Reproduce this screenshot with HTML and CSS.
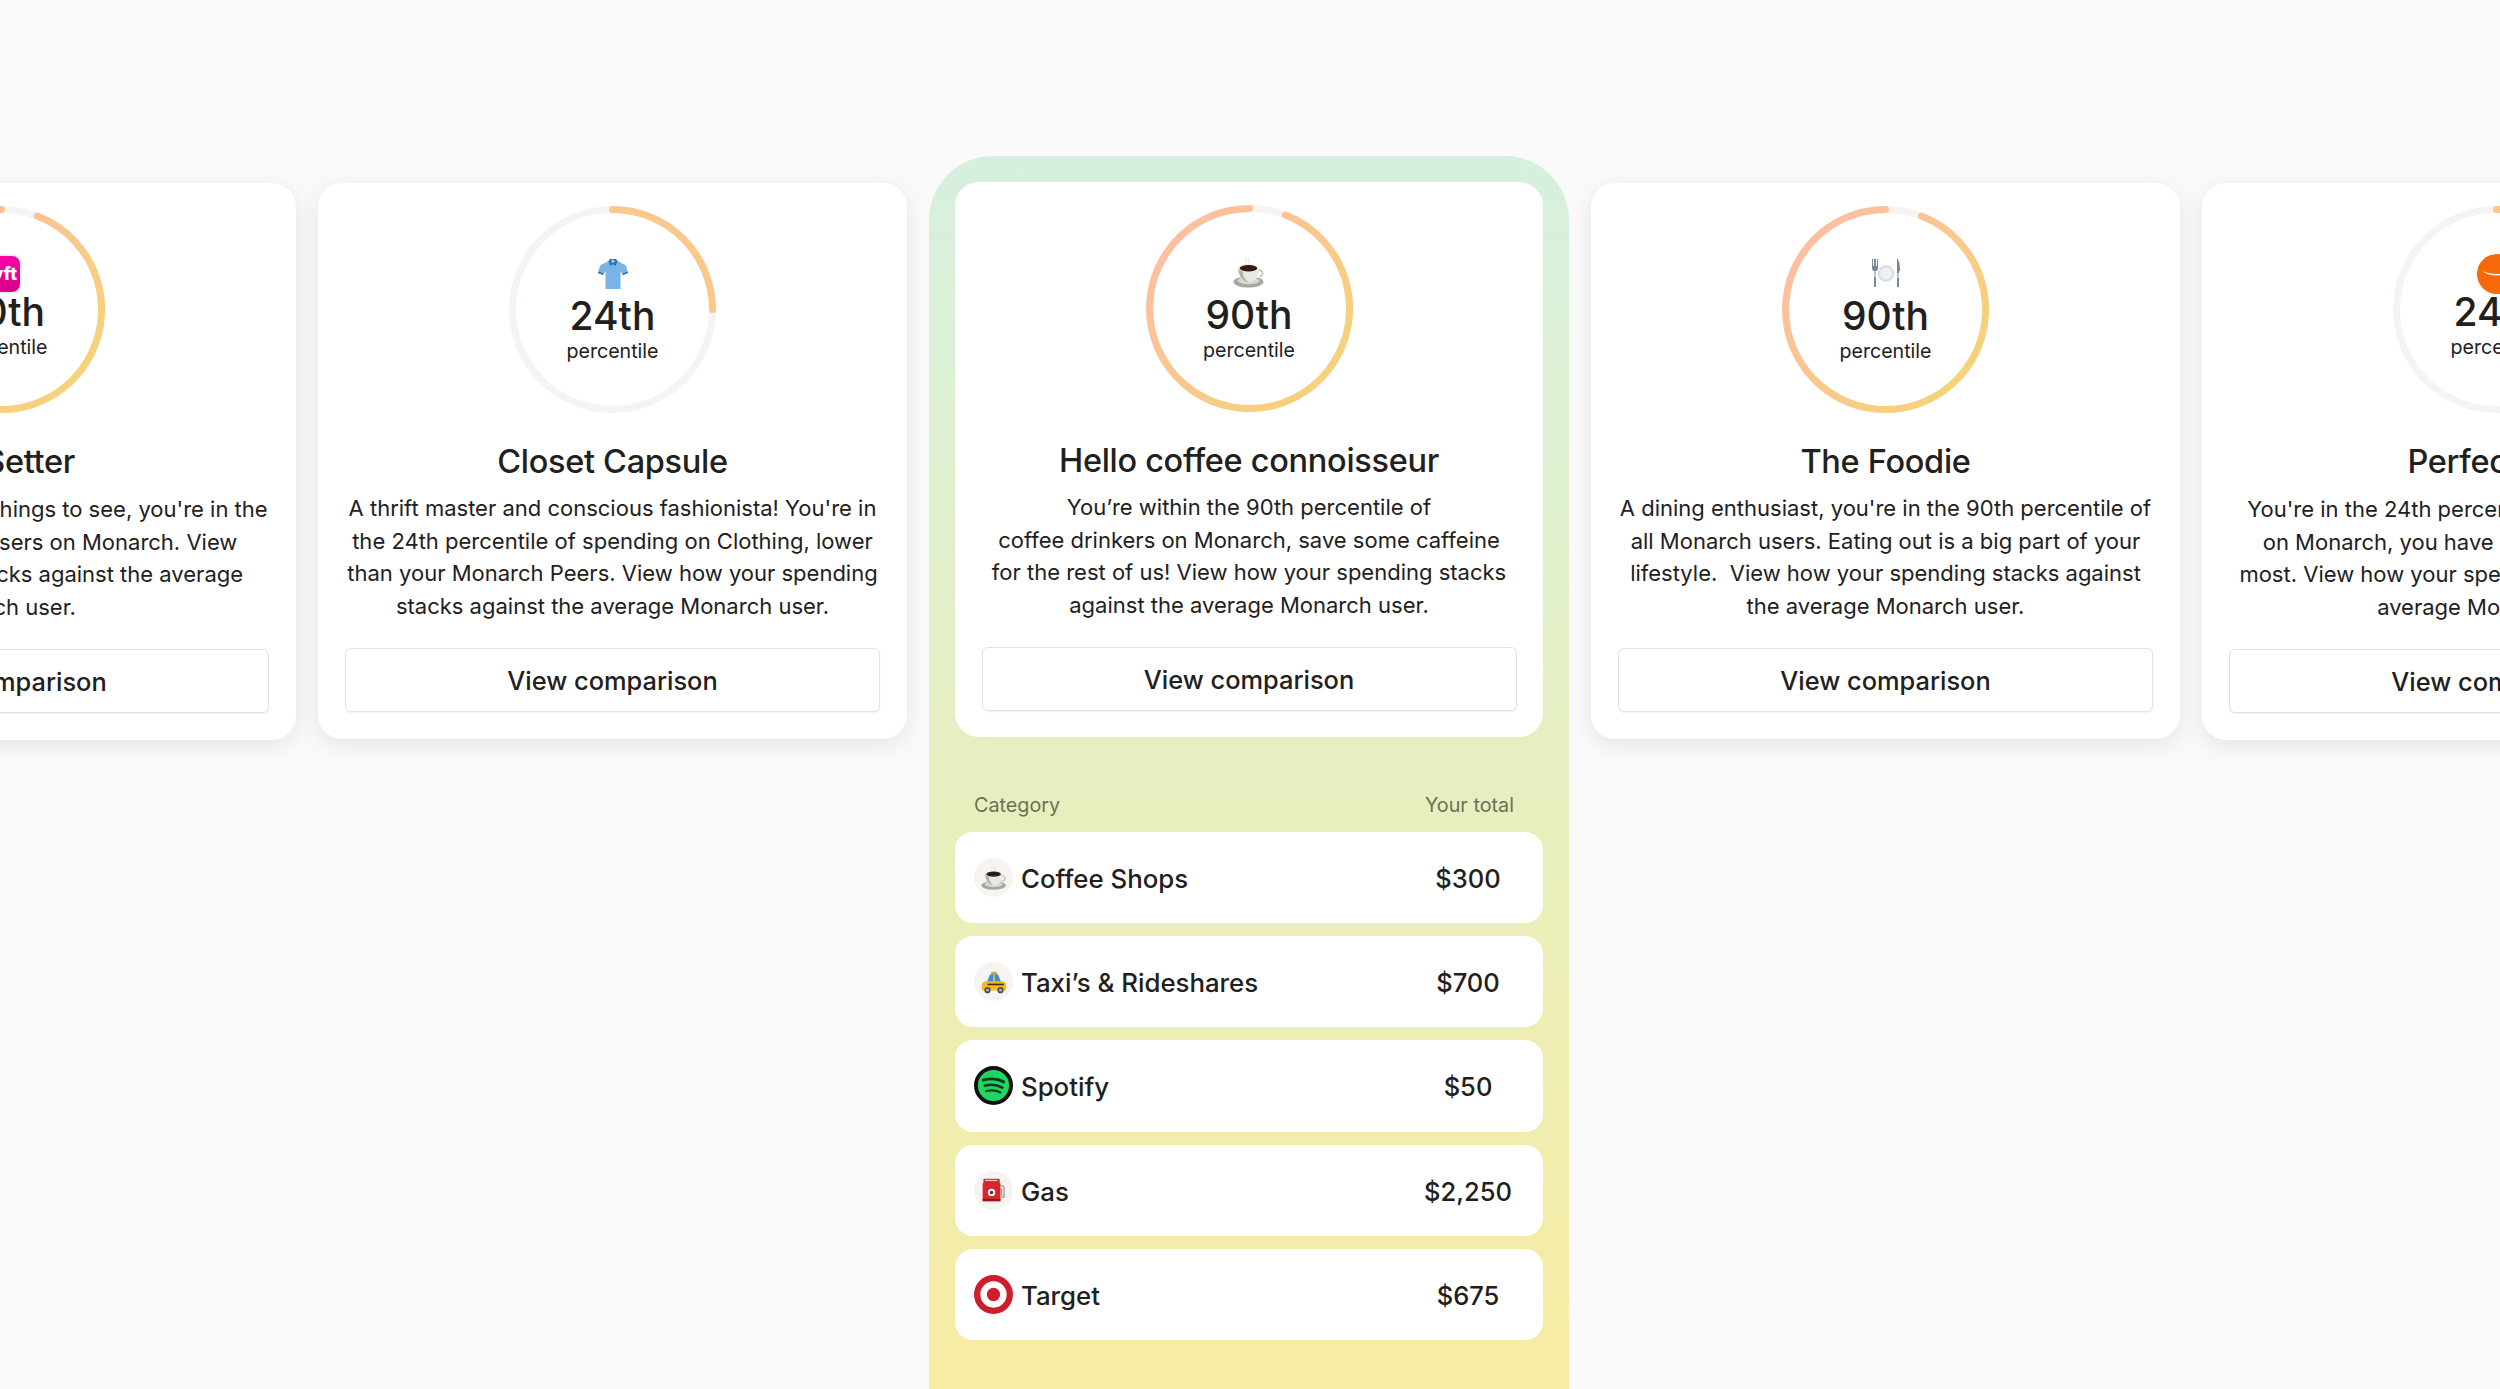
FILE: index.html
```html
<!DOCTYPE html>
<html lang="en">
<head>
    <meta charset="UTF-8">
    <title>Spending percentiles</title>
    <link rel="stylesheet" href="styles.css">
</head>
<body>

    <!-- shared drawings -->
    <svg class="sprites" width="0" height="0" aria-hidden="true">
        <defs>
            <linearGradient id="ringGrad" gradientUnits="userSpaceOnUse" x1="20" y1="60" x2="160" y2="190">
                <stop offset="0" stop-color="#fdbf9d"/>
                <stop offset="1" stop-color="#f6d27b"/>
            </linearGradient>
            <symbol id="ring90" viewBox="0 0 207 207">
                <circle cx="103.5" cy="103.5" r="100" fill="none" stroke="#f5f4f2" stroke-width="7"/>
                <path d="M139.3 10.1A100 100 0 1 1 103.5 3.5" fill="none" stroke="url(#ringGrad)" stroke-width="7" stroke-linecap="round"/>
            </symbol>
            <symbol id="ring24" viewBox="0 0 207 207">
                <circle cx="103.5" cy="103.5" r="100" fill="none" stroke="#f5f4f2" stroke-width="7"/>
                <path d="M103.5 3.5A100 100 0 0 1 203.5 103.5" fill="none" stroke="#fbc88c" stroke-width="7" stroke-linecap="round"/>
            </symbol>
            <symbol id="coffee" viewBox="0 0 32 32">
                <path d="M13 1.500c-1.500 1.500 1.500 2.500 0 4M16 1c-1.500 1.500 1.500 2.500 0 5" fill="none" stroke="#e6e6e4" stroke-width="1.200"/>
                <ellipse cx="15.500" cy="25" rx="15" ry="5.500" fill="#a9a69b"/>
                <ellipse cx="15.500" cy="23.800" rx="11" ry="3.500" fill="#d9d7cf"/>
                <path d="M25 13.500c5-1.500 6.500 4.500 1 6.500" fill="none" stroke="#c9c7c0" stroke-width="1.800"/>
                <path d="M5 11c0 8 3 14 10.500 14S26 19 26 11z" fill="#e9e8e3"/>
                <path d="M5 11c1 8 5 14 10.500 14-5-3-6-8-6-14z" fill="#b3b0a5"/>
                <ellipse cx="15.500" cy="11" rx="10.500" ry="4.200" fill="#f2f1ed"/>
                <ellipse cx="15.500" cy="11.300" rx="8.800" ry="3.200" fill="#2f1c12"/>
            </symbol>
            <symbol id="shirt" viewBox="0 0 32 32">
                <path d="M11.500 3 3 7.500 1 15l5 2 2.500-3.500V31h15V13.500L26 17l5-2-2-7.500L20.500 3l-4.500 2z" fill="#79b4e6"/>
                <path d="M1 15l5 2 .8-1.200-5.400-2.200zM31 15l-5 2-.8-1.200 5.400-2.200z" fill="#2f6fb0"/>
                <path d="M11.500 3 13 1h6l1.500 2-2 5L16 6l-2.500 2z" fill="#2c6cb0"/>
                <circle cx="16" cy="3.200" r="1.800" fill="#8fc2ec"/>
            </symbol>
            <symbol id="plate" viewBox="0 0 32 32">
                <path d="M2 1v9c0 2 1 3 2 3v16h2V13c1 0 2-1 2-3V1H7v7H6V1H4v7H3V1z" fill="#7b8794"/>
                <rect x="4" y="13" width="2" height="6" fill="#a9c7e6"/>
                <circle cx="16" cy="15.500" r="8.300" fill="#d8dde3"/>
                <circle cx="16" cy="15.500" r="6" fill="#eef0f2"/>
                <path d="M27 0c2 2 3 6 3 12l-1 2v15h-2z" fill="#7b8794"/>
                <rect x="27" y="15" width="2" height="5" fill="#a9c7e6"/>
            </symbol>
            <symbol id="taxi" viewBox="0 0 32 32">
                <rect x="12.500" y="3.500" width="7" height="3.500" rx="1" fill="#e8a317"/>
                <path d="M7 17l3.500-9c.3-1 1-1.500 2-1.500h7c1 0 1.700.5 2 1.500l3.500 9z" fill="#3f8fd6"/>
                <path d="M15 7h2v10h-2z" fill="#f4c22b"/>
                <path d="M1 25v-5c0-3 2.500-5 5-5h20c2.500 0 5 2 5 5v5c0 1-1 1.500-1.500 1.500h-27C2 26.500 1 26 1 25z" fill="#f6b91e"/>
                <rect x="8" y="18" width="20" height="2" fill="#3b3323"/>
                <circle cx="8" cy="26" r="3.800" fill="#4a4f55"/>
                <circle cx="8" cy="26" r="1.600" fill="#b9bdc2"/>
                <circle cx="24" cy="26" r="3.800" fill="#4a4f55"/>
                <circle cx="24" cy="26" r="1.600" fill="#b9bdc2"/>
            </symbol>
            <symbol id="pump" viewBox="0 0 32 32">
                <rect x="3" y="2" width="20" height="6" rx="1" fill="#c92a30"/>
                <rect x="5" y="3.500" width="15" height="1.500" fill="#f2c6c6"/>
                <rect x="2" y="7" width="22" height="22" rx="1.500" fill="#d9262c"/>
                <circle cx="13" cy="19" r="4.500" fill="#fff"/>
                <circle cx="13" cy="19" r="2.200" fill="#3a3a3a"/>
                <rect x="2" y="27" width="22" height="3" fill="#98161b"/>
                <path d="M24 11h2.500c1.500 0 2 1 2 2v11c0 2-3 2-3 0V14" fill="none" stroke="#9b9b9b" stroke-width="1.500"/>
            </symbol>
        </defs>
    </svg>

    <div class="cards-row">

        <div class="card card-edge">
            <div class="ring">
                <svg class="ring-svg"><use href="#ring90"/></svg>
                <div class="ring-inner ring-inner-logo">
                    <svg class="logo-lyft" viewBox="0 0 40 40">
                        <defs>
                            <linearGradient id="lyftGrad" x1="0" y1="0" x2="0" y2="1">
                                <stop offset="0" stop-color="#ff00a8"/>
                                <stop offset="1" stop-color="#d6008c"/>
                            </linearGradient>
                        </defs>
                        <rect x="1" y="1" width="38" height="38" rx="9" fill="url(#lyftGrad)" stroke="#eeeeee" stroke-width="2"/>
                        <text x="20" y="26" text-anchor="middle" class="logo-lyft-text">lyft</text>
                    </svg>
                    <div class="ring-value ring-value-logo">90th</div>
                    <div class="ring-label">percentile</div>
                </div>
            </div>
            <h3>Jet Setter</h3>
            <p>With so many great new things to see, you're in the<br>90th percentile of all users on Monarch. View<br>how your spending stacks against the average<br>Monarch user.</p>
            <a class="compare-button">View comparison</a>
        </div>

        <div class="card">
            <div class="ring">
                <svg class="ring-svg"><use href="#ring24"/></svg>
                <div class="ring-inner">
                    <svg class="ring-icon"><use href="#shirt"/></svg>
                    <div class="ring-value">24th</div>
                    <div class="ring-label">percentile</div>
                </div>
            </div>
            <h3>Closet Capsule</h3>
            <p>A thrift master and conscious fashionista! You're in<br>the 24th percentile of spending on Clothing, lower<br>than your Monarch Peers. View how your spending<br>stacks against the average Monarch user.</p>
            <a class="compare-button">View comparison</a>
        </div>

        <div class="featured">
            <div class="card card-inner">
                <div class="ring">
                    <svg class="ring-svg"><use href="#ring90"/></svg>
                    <div class="ring-inner">
                        <svg class="ring-icon"><use href="#coffee"/></svg>
                        <div class="ring-value">90th</div>
                        <div class="ring-label">percentile</div>
                    </div>
                </div>
                <h3>Hello coffee connoisseur</h3>
                <p>You’re within the 90th percentile of<br>coffee drinkers on Monarch, save some caffeine<br>for the rest of us! View how your spending stacks<br>against the average Monarch user.</p>
                <a class="compare-button">View comparison</a>
            </div>

            <div class="table-head">
                <span>Category</span>
                <span>Your total</span>
            </div>
            <div class="table-rows">
                <div class="row">
                    <span class="row-icon"><svg><use href="#coffee"/></svg></span>
                    <span class="row-name">Coffee Shops</span>
                    <span class="row-amount">$300</span>
                </div>
                <div class="row">
                    <span class="row-icon"><svg><use href="#taxi"/></svg></span>
                    <span class="row-name">Taxi’s &amp; Rideshares</span>
                    <span class="row-amount">$700</span>
                </div>
                <div class="row">
                    <svg class="row-logo" viewBox="0 0 40 40">
                        <circle cx="20" cy="20" r="18" fill="#1ed760" stroke="#111" stroke-width="4"/>
                        <path d="M9.500 14.500c7-2 15-1.500 21 1.800" fill="none" stroke="#14351f" stroke-width="3" stroke-linecap="round"/>
                        <path d="M11 20.300c6-1.600 13-1 18 1.800" fill="none" stroke="#14351f" stroke-width="2.600" stroke-linecap="round"/>
                        <path d="M12.500 25.700c5-1.200 10.500-.8 14.500 1.500" fill="none" stroke="#14351f" stroke-width="2.200" stroke-linecap="round"/>
                    </svg>
                    <span class="row-name">Spotify</span>
                    <span class="row-amount">$50</span>
                </div>
                <div class="row">
                    <span class="row-icon"><svg><use href="#pump"/></svg></span>
                    <span class="row-name">Gas</span>
                    <span class="row-amount">$2,250</span>
                </div>
                <div class="row">
                    <svg class="row-logo" viewBox="0 0 40 40">
                        <circle cx="20" cy="20" r="20" fill="#cc1f2b"/>
                        <circle cx="20" cy="20" r="13.500" fill="#fff"/>
                        <circle cx="20" cy="20" r="6.800" fill="#cc1f2b"/>
                    </svg>
                    <span class="row-name">Target</span>
                    <span class="row-amount">$675</span>
                </div>
            </div>
        </div>

        <div class="card">
            <div class="ring">
                <svg class="ring-svg"><use href="#ring90"/></svg>
                <div class="ring-inner">
                    <svg class="ring-icon"><use href="#plate"/></svg>
                    <div class="ring-value">90th</div>
                    <div class="ring-label">percentile</div>
                </div>
            </div>
            <h3>The Foodie</h3>
            <p>A dining enthusiast, you're in the 90th percentile of<br>all Monarch users. Eating out is a big part of your<br>lifestyle.&nbsp; View how your spending stacks against<br>the average Monarch user.</p>
            <a class="compare-button">View comparison</a>
        </div>

        <div class="card card-edge">
            <div class="ring">
                <svg class="ring-svg"><use href="#ring24"/></svg>
                <div class="ring-inner ring-inner-logo">
                    <svg class="logo-round" viewBox="0 0 40 40">
                        <circle cx="20" cy="20" r="20" fill="#f76808"/>
                        <path d="M5 17c9 4 21 4 30 0-8 6-22 6-30 0z" fill="#fff"/>
                    </svg>
                    <div class="ring-value ring-value-logo">24th</div>
                    <div class="ring-label">percentile</div>
                </div>
            </div>
            <h3>Perfect Pair</h3>
            <p>You're in the 24th percentile of spending overall<br>on Monarch, you have seen what matters the<br>most. View how your spending stacks against the<br>average Monarch user.</p>
            <a class="compare-button">View comparison</a>
        </div>

    </div>

</body>
</html>
```

FILE: styles.css
```css
body {
    font-family: Inter, "Liberation Sans", sans-serif;
    background-color: #fafafa;
    color: #22201d;
    margin: 0;
    height: 1389px;
    overflow: hidden;
}

.sprites {
    position: absolute;
}

.cards-row {
    display: flex;
    align-items: flex-start;
    gap: 22px;
    margin-left: -293px;
    padding-top: 156px;
}

/* Cards */
.card {
    flex: none;
    box-sizing: border-box;
    width: 589px;
    height: 556px;
    margin-top: 27px;
    padding: 23px 27px 0;
    background-color: #fff;
    border-radius: 24px;
    box-shadow: 0 6px 24px rgba(0, 0, 0, 0.09);
    display: flex;
    flex-direction: column;
    align-items: center;
    text-align: center;
}

.card-edge {
    height: 557px;
}

.card-inner {
    width: 588px;
    height: 555px;
    margin-top: 0;
    box-shadow: none;
}

.card h3 {
    margin: 29px 0 0;
    font-size: 32.5px;
    line-height: 40px;
    font-weight: 500;
    letter-spacing: -0.3px;
}

.card p {
    margin: 10px 0 0;
    font-size: 22px;
    line-height: 32.6px;
    white-space: nowrap;
}

.card-edge p {
    margin-top: 11px;
}

.compare-button {
    box-sizing: border-box;
    width: 535px;
    height: 64px;
    margin-top: 26px;
    border: 1.5px solid #e4e1de;
    border-radius: 6px;
    box-shadow: 0 1px 2px rgba(0, 0, 0, 0.06);
    font-size: 25.4px;
    font-weight: 500;
    line-height: 63px;
    flex: none;
}

/* Percentile ring */
.ring {
    position: relative;
    flex: none;
    width: 207px;
    height: 207px;
}

.ring-svg {
    display: block;
    width: 207px;
    height: 207px;
}

.ring-inner {
    position: absolute;
    inset: 0;
    padding-top: 52px;
    display: flex;
    flex-direction: column;
    align-items: center;
}

.ring-inner-logo {
    padding-top: 48px;
}

.ring-icon {
    width: 32px;
    height: 32px;
    flex: none;
}

.logo-lyft,
.logo-round {
    width: 40px;
    height: 40px;
    flex: none;
}

.logo-lyft-text {
    font-family: Inter, sans-serif;
    font-size: 18px;
    font-weight: 800;
    fill: #fff;
}

.ring-value {
    margin-top: 4px;
    font-size: 39px;
    line-height: 44px;
    font-weight: 500;
}

.ring-value-logo {
    margin-top: -4px;
}

.ring-label {
    margin-top: 1px;
    font-size: 19.6px;
    line-height: 24px;
}

/* Featured column */
.featured {
    flex: none;
    box-sizing: border-box;
    width: 640px;
    height: 1300px;
    padding: 26px;
    border-radius: 64px 64px 0 0;
    background: linear-gradient(180deg, #d6f0df 0%, #e7efbe 50%, #f9eb9e 100%);
}

.table-head {
    display: flex;
    justify-content: space-between;
    margin-top: 54px;
    padding: 0 29px 0 19px;
    font-size: 19.8px;
    line-height: 28px;
    color: #6c6f58;
}

.table-rows {
    display: flex;
    flex-direction: column;
    gap: 13px;
    margin-top: 13px;
}

.row {
    display: flex;
    align-items: center;
    gap: 8px;
    height: 91.2px;
    padding: 0 20px 0 19px;
    background-color: #fff;
    border-radius: 18px;
}

.row-icon {
    flex: none;
    width: 39px;
    height: 39px;
    border-radius: 50%;
    background-color: #f5f4f2;
    display: flex;
    align-items: center;
    justify-content: center;
}

.row-icon svg {
    width: 26px;
    height: 26px;
}

.row-logo {
    flex: none;
    width: 39px;
    height: 39px;
}

.row-name {
    flex: 1;
    padding-top: 2px;
    font-size: 25.8px;
    font-weight: 500;
}

.row-amount {
    width: 110px;
    padding-top: 2px;
    text-align: center;
    font-size: 25.5px;
    font-weight: 500;
}
```
